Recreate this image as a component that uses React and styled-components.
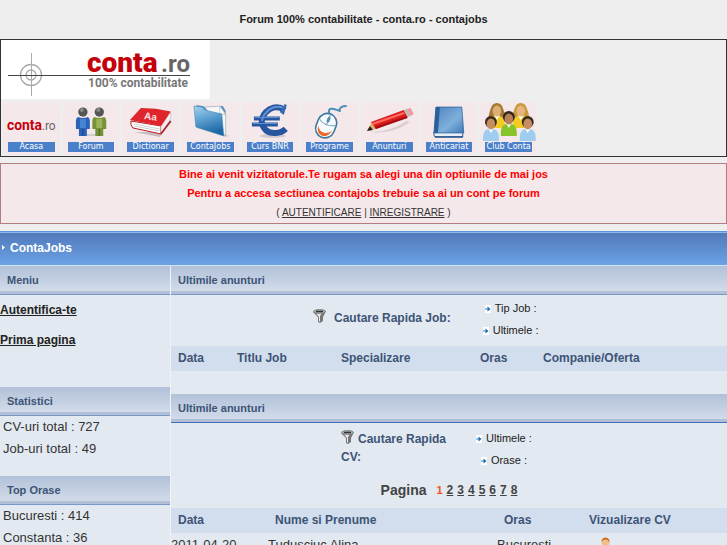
import React from 'react';
import styled, { createGlobalStyle } from 'styled-components';

const GlobalStyle = createGlobalStyle`
  * {
    box-sizing: border-box;
  }

  body {
    margin: 0;
    background: #eeeeee;
    color: #333;
    font-family: "Liberation Sans", Arial, Helvetica, sans-serif;
    font-size: 12px;
  }
`;

// Page header
const PageTitle = styled.h1`
  margin: 0;
  padding: 9px 0 10px;
  font-size: 11px;
  line-height: 20px;
  text-align: center;
  color: #222;
`;

const Banner = styled.header`
  border: 1px solid #333;
`;

const Logo = styled.a`
  display: block;
  width: 209px;
  height: 59px;
  background: #fff;
`;

const IconMenu = styled.nav`
  display: grid;
  grid-template-columns: repeat(9, 1fr);
  gap: 3px;
  max-width: 536px;
  padding: 3px 0 1px 2px;
`;

const Tile = styled.a`
  display: flex;
  flex-direction: column;
  height: 53px;
  border-radius: 5px;
  background: #f4e8ea;
  text-decoration: none;

  svg {
    display: block;
    width: 100%;
    height: 40px;
  }
`;

const TileLabel = styled.span`
  margin: 0 5px;
  background: #4a80ca;
  color: #fff;
  font-family: "DejaVu Sans", Verdana, sans-serif;
  font-size: 8px;
  line-height: 10px;
  text-align: center;
  white-space: nowrap;
`;

// Notice for visitors
const Notice = styled.section`
  margin: 6px 0 7px;
  padding: 1px 0;
  border: 1px solid #b27c80;
  background: #f4e8ea;
  font-size: 10px;
  line-height: 19px;
  text-align: center;

  p {
    margin: 0;
  }

  a {
    color: #333;
  }
`;

const Warning = styled.p`
  color: #ff0000;
  font-size: 11px;
  font-weight: bold;
`;

// Content
const TitleBar = styled.h2`
  display: flex;
  align-items: center;
  gap: 5px;
  height: 34px;
  margin: 0;
  padding: 0 2px 2px;
  border-top: 1px solid #5b92dc;
  box-shadow: inset 0 1px #8db8ee;
  background: linear-gradient(#4f78b8, #6ca2e6);
  color: #fff;
  font-size: 12px;
`;

const Content = styled.div`
  display: grid;
  grid-template-columns: 170px 1fr;
  column-gap: 1px;
  border-top: 1px solid #d5e1f2;
  background: #eff3f8;
`;

const Column = styled.div`
  min-width: 0;
  background: #e3e9f1;
`;

const SectionTitle = styled.h3`
  height: 29px;
  margin: 0;
  padding: 0 7px;
  border-bottom: 1px solid ${(props) => (props.$strong ? '#3f6fba' : '#7b97c6')};
  box-shadow: inset 0 -3px #b1bfd7;
  background: linear-gradient(#b2c1d9, #d5deeb);
  color: #3d5475;
  font-size: 11px;
  line-height: 28px;
`;

const SideLinks = styled.nav`
  display: flex;
  flex-direction: column;
  align-items: flex-start;
  height: 92px;
  line-height: 30px;

  a {
    color: #222;
    font-weight: bold;
  }
`;

const StatList = styled.ul`
  margin: 0;
  padding: 0 3px;
  min-height: 60px;
  list-style: none;
  font-size: 13px;
  line-height: 22px;
`;

const Search = styled.div`
  display: flex;
  gap: ${(props) => props.$gap};
  height: ${(props) => props.$height};
  padding-left: ${(props) => props.$indent};
`;

const SearchLabel = styled.div`
  width: ${(props) => props.$width};
  padding-top: ${(props) => props.$top};
  color: #3d5475;
  font-weight: bold;
  line-height: 18px;

  svg {
    margin-right: ${(props) => props.$space};
    vertical-align: -1px;
  }
`;

const SearchFields = styled.div`
  display: flex;
  flex-direction: column;
  align-items: center;
  padding-top: ${(props) => props.$top};
  color: #222;
  font-size: 11px;
  line-height: 22px;

  svg {
    margin-right: 4px;
    vertical-align: -1px;
  }
`;

const Pager = styled.nav`
  display: flex;
  justify-content: center;
  align-items: center;
  gap: 4px;
  height: 36px;
  font-weight: bold;

  a {
    color: #444;
  }
`;

const PagerTitle = styled.span`
  margin-right: 6px;
  font-size: 14px;
  color: #444;
`;

const CurrentPage = styled.span`
  color: #f4511e;
  font-size: 11px;
`;

const DataTable = styled.table`
  width: 100%;
  table-layout: fixed;
  border-collapse: collapse;
  margin-bottom: 23px;

  th {
    height: 25px;
    padding: 0 7px 2px;
    background: #d2ddee;
    color: #3d5475;
    text-align: left;
  }

  td {
    height: 22px;
    padding: 1px 0 0;
    font-size: 13px;
  }

  td svg {
    display: block;
    margin-left: 17px;
  }
`;

const LogoArt = () => (
  <svg width="209" height="59" viewBox="0 0 209 59">
    <g fill="none" stroke="#aaa">
      <circle cx="30" cy="35" r="10.5" strokeWidth="1.3" />
      <circle cx="30" cy="35" r="5" strokeWidth="1.3" />
      <path d="M30.5 13v43" />
    </g>
    <path d="M7 35.5h182" stroke="#444" />
    <g fontFamily="Roboto, sans-serif" fontWeight="bold">
      <text x="86" y="32" fontSize="28" fontWeight="900" fill="#c4000b">conta</text>
      <text x="160" y="32" fontSize="24" fill="#666">.ro</text>
      <text x="87" y="47" fontSize="12" fill="#777">100% contabilitate</text>
    </g>
  </svg>
);

const HomeIcon = () => (
  <svg viewBox="0 0 57 40">
    <g fontFamily="Roboto, sans-serif">
      <text x="4" y="28" fontSize="14" fontWeight="bold" fill="#c4000b">conta</text>
      <text x="39" y="28" fontSize="12" fill="#666">.ro</text>
    </g>
  </svg>
);

const ForumIcon = () => (
  <svg viewBox="0 0 57 40">
    <path d="M24 33h12" stroke="#ccc" strokeWidth="2" />
    <circle cx="20" cy="10" r="4.7" fill="#555" />
    <circle cx="36.5" cy="10" r="4.7" fill="#555" />
    <circle cx="19" cy="8" r="2" fill="#888" />
    <circle cx="35.5" cy="8" r="2" fill="#888" />
    <path d="M15 15q5 2 10 0q2 1 2 4v8h-3v7h-8v-7h-3v-8q0-3 2-4z" fill="#2a63b8" />
    <path d="M17 17h6v9h-6z" fill="#4884d6" />
    <path d="M20 27v7" stroke="#163e80" />
    <path d="M31.5 15q5 2 10 0q2 1 2 4v8h-3v7h-8v-7h-3v-8q0-3 2-4z" fill="#76913a" />
    <path d="M33.5 17h6v9h-6z" fill="#9bb45a" />
    <path d="M36.5 27v7" stroke="#4c6420" />
  </svg>
);

const DictionaryIcon = () => (
  <svg viewBox="0 0 57 40">
    <path d="M12 30l26 5 12-15-2-2-10 12z" fill="#c9bcbe" />
    <path d="M9 19l30 5v8L11 26q-3-3-2-7z" fill="#fff" stroke="#b41820" />
    <path d="M39 24l10-14v7L39 32z" fill="#eee" stroke="#b9b9b9" strokeWidth=".6" />
    <path d="M12 22l26 5M12 24l26 5" stroke="#bbb" strokeWidth=".7" />
    <path d="M8 18L19 6q15 0 30 3.5L39.5 24z" fill="#e0242b" />
    <path d="M39 32l10-13" stroke="#b41820" strokeWidth="1.5" />
    <text x="22" y="17" fontSize="10" fontWeight="bold" fill="#ffe0e0" fontFamily="Liberation Sans, sans-serif" transform="rotate(8 22 17)">Aa</text>
  </svg>
);

const FolderIcon = () => (
  <svg viewBox="0 0 57 40">
    <defs>
      <linearGradient id="folder" x1="0" y1="0" x2=".3" y2="1">
        <stop offset="0" stopColor="#a8d3ec" />
        <stop offset=".5" stopColor="#5a9fd0" />
        <stop offset="1" stopColor="#1d67a5" />
      </linearGradient>
    </defs>
    <path d="M14 26l30 9 3-1-14-8z" fill="#d8cdd0" />
    <path d="M14 3l7 1 2 1 18-1 3 5v25l-6-4z" fill="#4e94c5" />
    <path d="M23 5l15-1 6 8v22l-4-4z" fill="#f4f6f8" stroke="#aaa" strokeWidth=".6" />
    <path d="M38 4v7l6 2z" fill="#fff" stroke="#aaa" strokeWidth=".6" />
    <path d="M12 4l8 1 3 3 17 4 2 22-28-9z" fill="url(#folder)" stroke="#3b83b8" strokeWidth=".6" />
  </svg>
);

const EuroIcon = () => (
  <svg viewBox="0 0 57 40">
    <ellipse cx="31" cy="34" rx="13" ry="2" fill="#d2c9cf" />
    <g fill="none" stroke="#2755a0">
      <path d="M43 8Q36 3 28 7Q19 13 20 21Q23 32 34 31Q40 31 44 27" strokeWidth="6" />
      <path d="M12 16.5h26M10 22.5h26" strokeWidth="4" />
    </g>
    <g fill="none" stroke="#5f92d4">
      <path d="M42 6Q35 3 28 7Q21 12 20 19" strokeWidth="2" />
      <path d="M13 15.5h24M11 21.5h24" strokeWidth="1" />
    </g>
    <path d="M43 2l2 1-3 10-4-3z" fill="#356bb5" />
  </svg>
);

const MouseIcon = () => (
  <svg viewBox="0 0 57 40">
    <path d="M29 13Q26 5 33 7T39 9Q38 4 46 4" fill="none" stroke="#4c91b5" strokeWidth="2" />
    <g transform="rotate(22 25 23)">
      <rect x="16" y="11" width="19" height="25" rx="9.5" fill="#f8fafc" stroke="#3e78a2" strokeWidth="1.6" />
      <path d="M17 20q8 5 17 0M25.5 12v10" fill="none" stroke="#75a2bf" />
      <path d="M18 26q1 8 7.5 8.5q6-.5 7.5-8.5q-3 5-7.5 5q-5 0-7.500-5z" fill="#ee6828" />
      <rect x="24" y="14" width="3" height="6" rx="1.5" fill="#4c91b5" />
    </g>
  </svg>
);

const PencilIcon = () => (
  <svg viewBox="0 0 57 40">
    <path d="M8 30q20 1 38-11l3 1q-18 13-41 10z" fill="#d9cdcf" />
    <path d="M6 29l5-9 4 7z" fill="#e2b06b" />
    <path d="M6 29l3-5 3 4z" fill="#222" />
    <path d="M10 20L43 8l4 7L15 27z" fill="#dd1d1d" />
    <path d="M11 21L43 10l1 2L12 23z" fill="#ff6b5f" />
    <path d="M14 25L46 14l1 2L15 27z" fill="#a40e12" />
    <path d="M43 8l3-1 4 7-3 1z" fill="#bbb" />
    <path d="M46 7l4-1 3 6-3 2z" fill="#ef9a9d" />
  </svg>
);

const BookIcon = () => (
  <svg viewBox="0 0 57 40">
    <defs>
      <linearGradient id="cover" x1="0" y1="0" x2="1" y2="1">
        <stop offset="0" stopColor="#4a82bd" />
        <stop offset=".6" stopColor="#7fb0dc" />
        <stop offset="1" stopColor="#3f79b8" />
      </linearGradient>
    </defs>
    <path d="M13 30v3q0 2 2 2h27v-5z" fill="#e7eef5" stroke="#28578e" />
    <path d="M15 5h26l2 26H13z" fill="url(#cover)" stroke="#2e629d" strokeWidth=".8" />
    <path d="M15 5h4l-2 26h-4z" fill="#2b6098" />
    <path d="M14 35h28" stroke="#28578e" strokeWidth="1.5" />
  </svg>
);

const Person = ({ x, y, shirt, hair, skin, long }) => (
  <g transform={`translate(${x} ${y})`}>
    {long && <path d="M-6 0Q-9 8-8 10H8Q9 8 6 0z" fill={hair} />}
    <path d="M-8 20v-4q0-6 5-8h6q5 2 5 8v4z" fill={shirt} />
    <path d="M-3 7l3 5 3-5z" fill="#fff" />
    <circle cy="1" r="6" fill={hair} />
    <ellipse cy="3" rx="4.3" ry="5.5" fill={skin} />
  </g>
);

const ClubIcon = () => (
  <svg viewBox="0 0 57 40">
    <Person x={17} y={6} shirt="#f2cc22" hair="#a57a32" skin="#dfae76" long />
    <Person x={41} y={6} shirt="#f2cc22" hair="#c99a3c" skin="#e6b57d" long />
    <Person x={11} y={19} shirt="#9fcdf0" hair="#3a2a20" skin="#c48e60" />
    <Person x={48} y={19} shirt="#9fcdf0" hair="#3a2a20" skin="#c48e60" />
    <Person x={29} y={14} shirt="#86c429" hair="#33261f" skin="#b98054" />
  </svg>
);

const FunnelIcon = () => (
  <svg width="14" height="14" viewBox="0 0 14 14">
    <path d="M0 3l5 5v5l2 1 3-2V8l3-6z" fill="#777" />
    <path d="M3 4l3 4v4l1 1V7l2-3z" fill="#ececec" />
    <ellipse cx="6.5" cy="2.5" rx="6" ry="2" fill="#aaa" stroke="#777" strokeWidth=".8" />
    <path d="M3 2.5h7" stroke="#333" strokeWidth="1.5" />
  </svg>
);

const ArrowIcon = () => (
  <svg width="6" height="8" viewBox="0 0 6 8">
    <path d="M0 0h6v8H0z" fill="#fff" />
    <path d="M0 4h3" stroke="#3388cc" />
    <path d="M2.5 1.5L5.5 4 2.5 6.5z" fill="#1b6cad" />
  </svg>
);

const BulletIcon = () => (
  <svg width="3" height="5" viewBox="0 0 3 5">
    <path d="M0 0l3 2.5L0 5z" fill="#fff" />
  </svg>
);

const UserIcon = () => (
  <svg width="13" height="16" viewBox="0 0 13 16">
    <path d="M1 16v-3q0-4 3-4h5q3 0 3 4v3z" fill="#4a9be0" />
    <path d="M5 8h3l-1 4z" fill="#fff" />
    <circle cx="6.5" cy="5" r="4" fill="#f3bd84" />
    <path d="M2.5 5q0-4 4-4.5q4 .5 4 4.500q-2-3-4-2.500q-3 0-4 2.500z" fill="#cc6a1e" />
  </svg>
);

const menu = [
  { label: 'Acasa', Icon: HomeIcon },
  { label: 'Forum', Icon: ForumIcon },
  { label: 'Dictionar', Icon: DictionaryIcon },
  { label: 'ContaJobs', Icon: FolderIcon },
  { label: 'Curs BNR', Icon: EuroIcon },
  { label: 'Programe', Icon: MouseIcon },
  { label: 'Anunturi', Icon: PencilIcon },
  { label: 'Anticariat', Icon: BookIcon },
  { label: 'Club Conta', Icon: ClubIcon },
];

const pages = [2, 3, 4, 5, 6, 7, 8];

const App = () => {
  return (
    <>
      <GlobalStyle />
      <PageTitle>Forum 100% contabilitate - conta.ro - contajobs</PageTitle>
      <Banner>
        <Logo href="#"><LogoArt /></Logo>
        <IconMenu>
          {menu.map(({ label, Icon }) => (
            <Tile href="#" key={label}>
              <Icon />
              <TileLabel>{label}</TileLabel>
            </Tile>
          ))}
        </IconMenu>
      </Banner>

      <Notice>
        <Warning>Bine ai venit vizitatorule.Te rugam sa alegi una din optiunile de mai jos</Warning>
        <Warning>Pentru a accesa sectiunea contajobs trebuie sa ai un cont pe forum</Warning>
        <p>( <a href="#">AUTENTIFICARE</a> | <a href="#">INREGISTRARE</a> )</p>
      </Notice>

      <TitleBar><BulletIcon />ContaJobs</TitleBar>
      <Content>
        <Column>
          <SectionTitle>Meniu</SectionTitle>
          <SideLinks>
            <a href="#">Autentifica-te</a>
            <a href="#">Prima pagina</a>
          </SideLinks>
          <SectionTitle>Statistici</SectionTitle>
          <StatList>
            <li>CV-uri total : 727</li>
            <li>Job-uri total : 49</li>
          </StatList>
          <SectionTitle>Top Orase</SectionTitle>
          <StatList>
            <li>Bucuresti : 414</li>
            <li>Constanta : 36</li>
          </StatList>
        </Column>

        <Column>
          <SectionTitle>Ultimile anunturi</SectionTitle>
          <Search $indent="142px" $gap="32px" $height="51px">
            <SearchLabel $top="14px" $space="7px">
              <FunnelIcon />Cautare Rapida Job:
            </SearchLabel>
            <SearchFields $top="2px">
              <span><ArrowIcon />Tip Job :</span>
              <span><ArrowIcon />Ultimele :</span>
            </SearchFields>
          </Search>
          <DataTable>
            <colgroup>
              <col width="59" />
              <col width="104" />
              <col width="139" />
              <col width="63" />
              <col />
            </colgroup>
            <thead>
              <tr>
                <th>Data</th>
                <th>Titlu Job</th>
                <th>Specializare</th>
                <th>Oras</th>
                <th>Companie/Oferta</th>
              </tr>
            </thead>
          </DataTable>

          <SectionTitle $strong>Ultimile anunturi</SectionTitle>
          <Search $indent="170px" $gap="20px" $height="49px">
            <SearchLabel $top="7px" $space="3px" $width="115px">
              <FunnelIcon />Cautare Rapida CV:
            </SearchLabel>
            <SearchFields $top="4px">
              <span><ArrowIcon />Ultimele :</span>
              <span><ArrowIcon />Orase :</span>
            </SearchFields>
          </Search>
          <Pager>
            <PagerTitle>Pagina</PagerTitle>
            <CurrentPage>1</CurrentPage>
            {pages.map((page) => (
              <a href="#" key={page}>{page}</a>
            ))}
          </Pager>
          <DataTable>
            <colgroup>
              <col width="97" />
              <col width="229" />
              <col width="85" />
              <col />
            </colgroup>
            <thead>
              <tr>
                <th>Data</th>
                <th>Nume si Prenume</th>
                <th>Oras</th>
                <th>Vizualizare CV</th>
              </tr>
            </thead>
            <tbody>
              <tr>
                <td>2011-04-20</td>
                <td>Tudusciuc Alina</td>
                <td>Bucuresti</td>
                <td><UserIcon /></td>
              </tr>
            </tbody>
          </DataTable>
        </Column>
      </Content>
    </>
  );
};

export default App;
